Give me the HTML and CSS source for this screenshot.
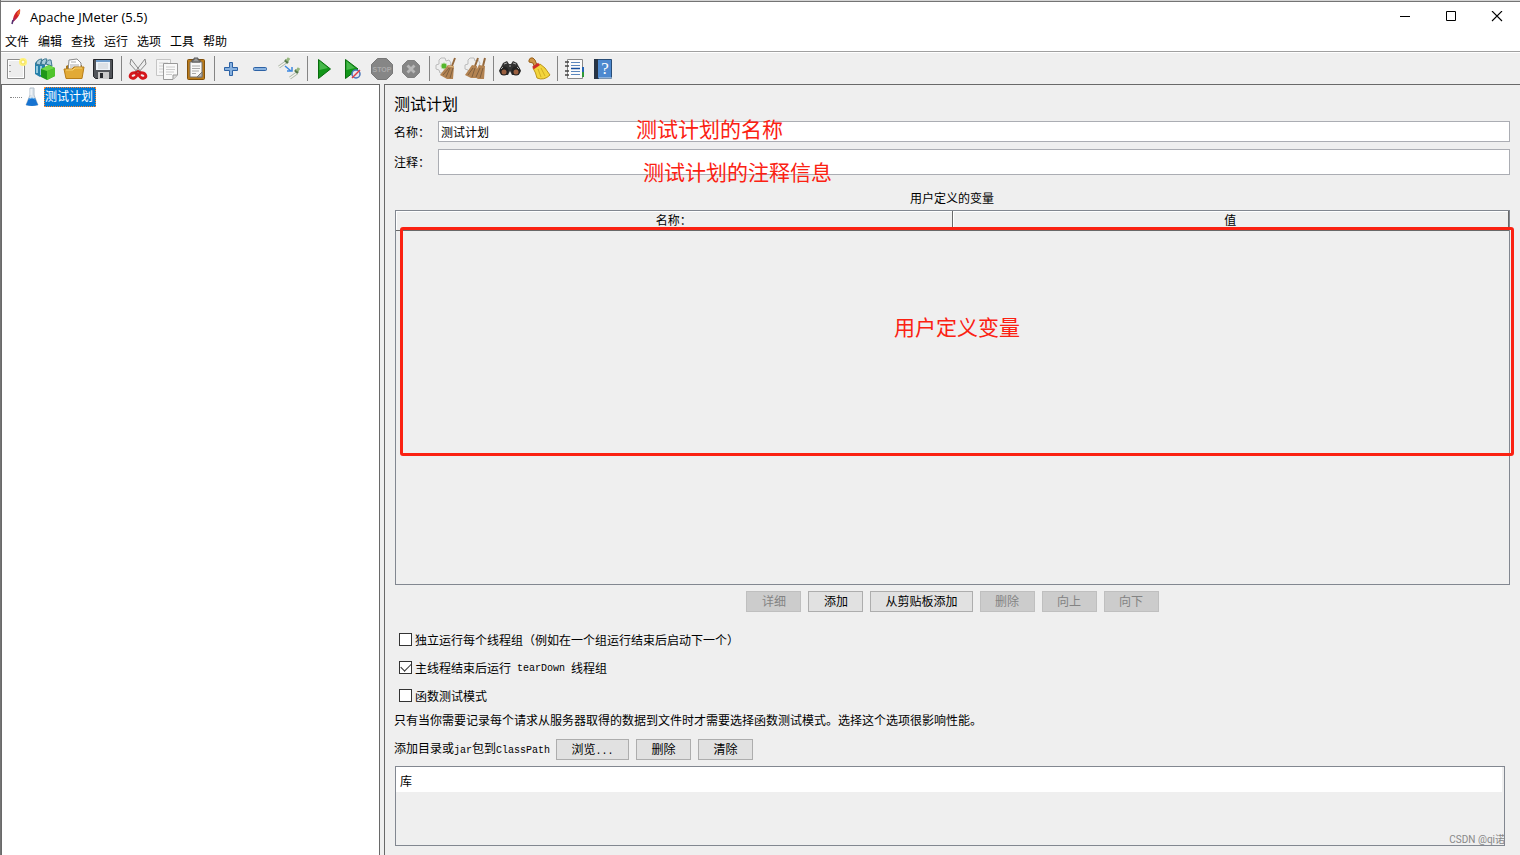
FILE: index.html
```html
<!DOCTYPE html>
<html lang="zh-CN">
<head>
<meta charset="utf-8">
<title>Apache JMeter (5.5)</title>
<link rel="stylesheet" href="styles.css">
</head>
<body>
<div class="window">
  <header class="titlebar">
    <svg class="feather" width="16" height="16" viewBox="0 0 16 16"><path d="M5 11C5 7 8 2 12 0C13 4 10 9 6 12Z" fill="#d22128"/><path d="M9 4L12 0V4L10 7Z" fill="#e9622b"/><path d="M5 10L8 8L7 11L5 13Z" fill="#a02b65"/><path d="M5 11L4 15" stroke="#54306f" stroke-width="1.500"/></svg>
    <h1 class="app-name">Apache JMeter (5.5)</h1>
    <div class="window-controls">
      <button aria-label="最小化"><svg width="12" height="12" viewBox="0 0 12 12"><path d="M1 5.500H11" stroke="#000"/></svg></button>
      <button aria-label="最大化"><svg width="12" height="12" viewBox="0 0 12 12"><path d="M1.500 0.500H10.500V9.500H1.500Z" stroke="#000" fill="none"/></svg></button>
      <button aria-label="关闭"><svg width="12" height="12" viewBox="0 0 12 12"><path d="M1 0L11 10M11 0L1 10" stroke="#000" stroke-width="1.100"/></svg></button>
    </div>
  </header>
  <nav class="menubar">
    <button>文件</button><button>编辑</button><button>查找</button><button>运行</button><button>选项</button><button>工具</button><button>帮助</button>
  </nav>
  <div class="toolbar">
    <button aria-label="新建"><svg viewBox="0 0 24 24"><path d="M3.500 2.500H20.500V21.500H3.500Z" fill="#fff" stroke="#8d8d8d"/><path d="M5 4H19V20H5Z" fill="#ededed"/><path d="M6 8v1M6 14v1" stroke="#888" stroke-width="1.500"/><circle cx="19" cy="5" r="4" fill="#fff27a"/><circle cx="19" cy="5" r="2" fill="#fffde0" stroke="#f1df55"/></svg></button>
    <button aria-label="模板"><svg viewBox="0 0 24 24"><path d="M2 6L5 3L12 4V18L7 20L2 17Z" fill="#2580aa"/><path d="M3 7Q4 2 9 2L7 8ZM8 7Q9 1 14 2L12 8ZM13 7Q14 2 18 3L19 9Z" fill="#a9ccda" stroke="#3e7891"/><path d="M4 9V16M8 9V18" stroke="#b7e1ee" stroke-width="1.500"/><path d="M8 12L16 8L22 11V19L14 23L8 20Z" fill="#209719"/><path d="M14 14L22 11V19L14 23Z" fill="#4fc42d"/><path d="M8 12L16 8L22 11L14 14Z" fill="#71d848"/></svg></button>
    <button aria-label="打开"><svg viewBox="0 0 24 24"><path d="M4 9L6 8H20V20H4Z" fill="#a87516"/><path d="M7 3L15 2L19 6V15H6Z" fill="#fff" stroke="#8b8b8b"/><path d="M9 5H14M8 8H17M8 10H17" stroke="#aaa"/><path d="M2 12H10L12 10H22L20 21.500H4Z" fill="#e2aa36" stroke="#b77d18"/><path d="M4 13H11L13 11H20" stroke="#f6d577" fill="none"/></svg></button>
    <button aria-label="保存"><svg viewBox="0 0 24 24"><path d="M2.500 2.500H21.500V21.500H4.500L2.500 19.500Z" fill="#515459" stroke="#25272b"/><path d="M5 3H19V13H5Z" fill="#edf3f8"/><path d="M5 3H19V5H5Z" fill="#6f9dcb"/><path d="M7 7H17M7 9H17M7 11H17" stroke="#c9ced2"/><path d="M7 15H18V22H7Z" fill="#c9c9c9"/><path d="M9 16H12V21H9Z" fill="#27292d"/></svg></button>
    <span class="separator"></span>
    <button aria-label="剪切"><svg viewBox="0 0 24 24"><path d="M5 2L15 15L13 17L4 7ZM19 2L9 15L11 17L20 7Z" fill="#ededed" stroke="#888"/><ellipse cx="7.500" cy="18.500" rx="3.500" ry="2.500" fill="none" stroke="#d5161c" stroke-width="3" transform="rotate(-25 7.500 18.500)"/><ellipse cx="16.500" cy="18.500" rx="3.500" ry="2.500" fill="none" stroke="#d5161c" stroke-width="3" transform="rotate(25 16.500 18.500)"/><path d="M9 16L12 14L15 16" stroke="#c41218" stroke-width="2" fill="none"/></svg></button>
    <button aria-label="复制"><svg viewBox="0 0 24 24"><path d="M1.500 2.500H15.500V18.500H1.500Z" fill="#f6f6f6" stroke="#c5c5c5"/><path d="M4 6H13M4 9H8M4 12H8M4 15H8" stroke="#d0d0d0"/><path d="M8.500 6.500H22.500V18L18 22.500H8.500Z" fill="#f9f9f9" stroke="#999"/><path d="M11 10H20M11 12.500H20M11 15H19M11 17.500H17" stroke="#ccc"/><path d="M18 22V18H22" fill="#ddd" stroke="#999"/></svg></button>
    <button aria-label="粘贴"><svg viewBox="0 0 24 24"><rect x="3.500" y="2.500" width="17" height="20" rx="1" fill="#b97a1b" stroke="#80500b"/><path d="M6 5H18V20H6Z" fill="#f8f8f8" stroke="#777"/><path d="M8 9H16M8 11.500H16M8 14H15M8 16.500H12" stroke="#aaa"/><path d="M8 5V3H10V1H14V3H16V5Z" fill="#999" stroke="#555"/><path d="M13 20L18 15V20Z" fill="#bbb" stroke="#777"/></svg></button>
    <span class="separator"></span>
    <button aria-label="展开"><svg viewBox="0 0 24 24"><path d="M10.500 5.500H13.500V10.500H18.500V13.500H13.500V18.500H10.500V13.500H5.500V10.500H10.500Z" fill="#87b1df" stroke="#2d62a5" stroke-linejoin="round"/></svg></button>
    <button aria-label="折叠"><svg viewBox="0 0 24 24"><rect x="5.500" y="10.500" width="13" height="3" rx="1" fill="#87b1df" stroke="#2d62a5"/></svg></button>
    <button aria-label="切换"><svg viewBox="0 0 24 24"><path d="M2 10L9 5M13 21L20 16" stroke="#aeb8aa" stroke-width="3"/><path d="M2 10L9 5M13 21L20 16" stroke="#f5f5ef" stroke-width="1.500"/><path d="M8 3L11 6M18 13L21 16" stroke="#55794b" stroke-width="2.500"/><path d="M10 4L12 1M20 14L22 11" stroke="#96b77e" stroke-width="3"/><path d="M8 9L14 14M15 10V14H10" stroke="#3d88e0" stroke-width="1.500" fill="none"/></svg></button>
    <span class="separator"></span>
    <button aria-label="启动"><svg viewBox="0 0 24 24"><path d="M6.500 2.500L18.500 12L6.500 21.500Z" fill="#129619" stroke="#086b0d"/><path d="M7.500 4L16 11L7.500 13Z" fill="#47b84b"/></svg></button>
    <button aria-label="不停顿启动"><svg viewBox="0 0 24 24"><path d="M4.500 2.500L17 12L4.500 21.500Z" fill="#129619" stroke="#086b0d"/><path d="M5.500 4L14 11L5.500 13Z" fill="#47b84b"/><circle cx="15" cy="17" r="4" fill="#e5e7ef" stroke="#4774ba" stroke-width="1.500"/><path d="M11 21L19 13" stroke="#e13c42" stroke-width="1.500"/></svg></button>
    <button aria-label="停止" disabled><svg viewBox="0 0 24 24"><path d="M7.500 1.500H16.500L22.500 7.500V16.500L16.500 22.500H7.500L1.500 16.500V7.500Z" fill="#868686" stroke="#777"/><text x="12" y="15" text-anchor="middle" class="stop-word">STOP</text></svg></button>
    <button aria-label="关闭线程" disabled><svg viewBox="0 0 24 24"><path d="M8.500 3.500H15.500L20.500 8.500V15.500L15.500 20.500H8.500L3.500 15.500V8.500Z" fill="#868686" stroke="#808080" stroke-linejoin="round"/><path d="M8.500 8.500L15.500 15.500M15.500 8.500L8.500 15.500" stroke="#b8b8b8" stroke-width="2.800"/></svg></button>
    <span class="separator"></span>
    <button aria-label="清除"><svg viewBox="0 0 24 24"><path d="M7 1H11L12 4L15 3L17 6L16 9L18 12L14 16H6L5 13L2 12V8L5 7V3Z" fill="#eee" stroke="#bbb"/><circle cx="10" cy="9" r="3" fill="#54b72c" stroke="#b7dba5"/><path d="M21 1L18 9" stroke="#94683c" stroke-width="2"/><path d="M14 8L20 9L19 22H13L6 18Z" fill="#b38352"/><path d="M15 11L9 18M16 11L12 20M19 11L16 21" stroke="#80603e"/><path d="M14 9L20 10" stroke="#dfbd86"/></svg></button>
    <button aria-label="清除全部"><svg viewBox="0 0 24 24"><path d="M7 1H11L12 4L15 3L17 6L16 9L18 12L14 16H6L5 13L2 12V8L5 7V3Z" fill="#eee" stroke="#bbb"/><path d="M15 1L12 9M22 1L20 9" stroke="#94683c" stroke-width="2"/><path d="M9 8L14 9L13 21H8L2 18ZM16 8L22 9L21 22H15L10 19Z" fill="#b38352"/><path d="M10 11L5 18M12 11L9 20M17 11L13 20M20 11L17 21" stroke="#80603e"/></svg></button>
    <span class="separator"></span>
    <button aria-label="搜索"><svg viewBox="0 0 24 24"><path d="M5 6L9 4L11 7H13L15 4L19 6L23 14L19 18H14L12 14L10 18H5L1 14Z" fill="#333"/><circle cx="6" cy="14" r="4.500" fill="#222"/><circle cx="18" cy="14" r="4.500" fill="#222"/><circle cx="6" cy="15" r="2.500" fill="#9b6040"/><circle cx="18" cy="15" r="2.500" fill="#9b6040"/><path d="M6 7L9 6M15 6L18 7M11 9H13M3 12L5 10M19 10L21 12" stroke="#aaa"/></svg></button>
    <button aria-label="重置搜索"><svg viewBox="0 0 24 24"><path d="M2 3Q3 0 6 1L8 3L10 8L7 9L6 6L2 5Z" fill="#cf9548" stroke="#986019"/><path d="M6 11L13 7L18 11L23 18Q17 24 10 21Q9 16 6 11Z" fill="#f3d53c" stroke="#bc951b"/><path d="M6 11L12 7" stroke="#cf2d29" stroke-width="3"/><path d="M11 12L14 20M14 11L18 19" stroke="#d2ae23"/></svg></button>
    <span class="separator"></span>
    <button aria-label="函数助手"><svg viewBox="0 0 24 24"><path d="M5.500 2.500H20.500V21.500H5.500Z" fill="#fbfbfb" stroke="#888"/><path d="M9 5.500H18M9 8.500H18M9 14.500H18M9 17.500H18" stroke="#5b87bd"/><path d="M9 11.500H18" stroke="#174e9c" stroke-width="1.500"/><path d="M3 5H7M3 9H7M3 14H7M3 18H7" stroke="#444" stroke-width="1.500"/><path d="M20 10H22V15H20Z" fill="#2362b4"/><path d="M20 15H22V20H20Z" fill="#2e9836"/></svg></button>
    <button aria-label="帮助"><svg viewBox="0 0 24 24"><path d="M3.500 2.500H20.500V21.500H3.500Z" fill="#4d89cf" stroke="#294d77"/><path d="M3 2H7V22H3Z" fill="#263345"/><path d="M8 21H21" stroke="#c9d9e9"/><text x="14" y="17" text-anchor="middle" class="help-mark">?</text></svg></button>
  </div>
  <div class="workspace">
    <aside class="tree">
      <span class="branch"></span>
      <svg width="14" height="20" viewBox="0 0 14 20"><path d="M5 1H9V8L13 18H1L5 8Z" fill="#dce5ed" stroke="#b4c1cc"/><path d="M4 11H10L13 18Q7 20 1 18Z" fill="#1673d1"/><path d="M4 12Q7 10 10 12" stroke="#71b7ef" fill="none"/><path d="M6 2V8" stroke="#fff"/></svg>
      <button class="tree-node">测试计划</button>
    </aside>
    <main class="panel">
      <h2 class="panel-title">测试计划</h2>
      <div class="field name-field"><label for="name">名称：</label><input id="name" type="text" value="测试计划"></div>
      <div class="field comment-field"><label for="comment">注释：</label><input id="comment" type="text"></div>
      <div class="table-caption" id="vars">用户定义的变量</div>
      <div class="table-box">
        <table class="variables" aria-labelledby="vars"><thead><tr><th>名称：</th><th>值</th></tr></thead></table>
      </div>
      <div class="actions">
        <button disabled>详细</button><button>添加</button><button>从剪贴板添加</button><button disabled>删除</button><button disabled>向上</button><button disabled>向下</button>
      </div>
      <div class="options">
        <label><input type="checkbox">独立运行每个线程组（例如在一个组运行结束后启动下一个）</label>
        <label><input type="checkbox" checked>主线程结束后运行<span class="latin"> tearDown </span>线程组</label>
        <label><input type="checkbox">函数测试模式</label>
      </div>
      <p class="hint">只有当你需要记录每个请求从服务器取得的数据到文件时才需要选择函数测试模式。选择这个选项很影响性能。</p>
      <div class="classpath">
        <span class="classpath-label">添加目录或<span class="latin">jar</span>包到<span class="latin">ClassPath</span></span>
        <button>浏览<span class="latin">...</span></button><button>删除</button><button>清除</button>
      </div>
      <div class="library-box"><table class="library"><thead><tr><th>库</th></tr></thead></table></div>
      <div class="note note-name">测试计划的名称</div>
      <div class="note note-comment">测试计划的注释信息</div>
      <div class="note note-frame"><span>用户定义变量</span></div>
      <div class="watermark">CSDN @qi诺</div>
    </main>
  </div>
</div>
</body>
</html>
```
FILE: styles.css
```css
* { box-sizing: border-box; }

body {
  margin: 0;
  background: #efefef;
  color: #000;
  font: 12px/18px "Liberation Sans", "Noto Sans CJK SC", sans-serif;
}

button, input { font: inherit; color: inherit; }
button { padding: 0; border: 0; background: none; }
h1, h2, p { margin: 0; font-weight: 400; }

.window {
  display: flex;
  flex-direction: column;
  min-height: 100vh;
  border-left: 1px solid #747474;
}

.titlebar {
  display: flex;
  align-items: center;
  height: 32px;
  padding-left: 7px;
  background: #fff;
  border-top: 1px solid #d5d5d5;
  box-shadow: inset 0 1px #747474;
}
.app-name { margin-left: 6px; font: 13px/18px "Open Sans", "Noto Sans", sans-serif; }
.window-controls { display: flex; margin-left: auto; }
.window-controls button { display: grid; place-items: center; width: 46px; height: 28px; }

.menubar {
  display: flex;
  gap: 9px;
  height: 20px;
  padding-left: 4px;
  background: #fff;
  border-bottom: 1px solid #a0a0a0;
}
.menubar button { padding-top: 1px; line-height: 18px; }

.toolbar {
  display: flex;
  align-items: center;
  height: 32px;
  border-top: 1px solid #fff;
}
.toolbar button { display: grid; place-items: center; width: 29px; height: 30px; }
.toolbar svg { width: 24px; height: 24px; }
.separator { width: 1px; height: 25px; margin: 0 1px 0 4px; background: #858585; }
.stop-word { font: bold 7px "Liberation Sans", sans-serif; fill: #aaa; }
.help-mark { font: 17px "Liberation Serif", serif; fill: #fff; }

.workspace { display: flex; flex: 1; gap: 4px; }
.tree {
  display: flex;
  align-items: flex-start;
  flex: 0 0 379px;
  padding: 2px 0 0 8px;
  background: #fff;
  border: 1px solid #696969;
  border-bottom: 0;
}
.branch { width: 12px; margin: 10px 3px 0 0; border-top: 1px dotted #888; }
.tree-node {
  height: 20px;
  margin-left: 5px;
  padding: 1px 2px 0 0;
  background: #0078d7;
  border: 1px dotted #ff8728;
  color: #fff;
  line-height: 17px;
}

.panel {
  position: relative;
  display: flex;
  flex-direction: column;
  flex: 1;
  min-width: 0;
  padding: 8px 10px 9px 9px;
  border-top: 1px solid #696969;
  border-left: 1px solid #696969;
}
.panel-title { padding-top: 1px; font-size: 16px; line-height: 22px; }
.field { display: flex; align-items: center; }
.field label { width: 44px; padding-top: 2px; }
.field input {
  flex: 1;
  min-width: 0;
  padding: 0 2px;
  background: #fff;
  border: 1px solid #abadb3;
  outline: 0;
}
.name-field { margin-top: 5px; }
.name-field input { height: 21px; }
.comment-field { margin-top: 7px; }
.comment-field input { height: 26px; }
.table-caption { margin-top: 14px; line-height: 20px; text-align: center; }

.table-box { flex: 1; min-height: 120px; margin: 1px 0 0 1px; border: 1px solid #828790; }
.variables { width: 100%; border-collapse: collapse; table-layout: fixed; }
.variables th {
  height: 19px;
  padding: 1px 0 0;
  border-right: 1px solid #696969;
  border-bottom: 1px solid #696969;
  font-weight: 400;
  line-height: 18px;
  box-shadow: inset 1px 1px #fff;
}
.actions { display: flex; justify-content: center; gap: 7px; margin: 6px 0 0 1px; }
.actions button, .classpath button {
  height: 21px;
  min-width: 55px;
  padding: 1px 14px 0;
  background: #e1e1e1;
  border: 1px solid #adadad;
  line-height: 18px;
}
.actions button:disabled { background: #ccc; border-color: #bfbfbf; color: #838383; }

.options { display: grid; justify-items: start; margin-top: 14px; padding-left: 5px; }
.options label { display: flex; align-items: center; height: 28px; padding-top: 1px; white-space: pre; }
.options input {
  appearance: none;
  display: grid;
  place-items: center;
  width: 13px;
  height: 13px;
  margin: 0 3px 2px 0;
  background: #fff;
  border: 1px solid #333;
}
.options input:checked::before {
  content: "";
  width: 9px;
  height: 5px;
  margin-bottom: 3px;
  border: solid #333;
  border-width: 0 0 1px 1px;
  transform: rotate(-45deg);
}
.latin { font: 10px/18px "Liberation Mono", monospace; white-space: pre; }
.hint { padding-top: 1px; line-height: 20px; }
.classpath { display: flex; align-items: center; gap: 7px; margin-top: 7px; }
.classpath-label { padding-top: 2px; white-space: nowrap; }
.classpath-label + button { min-width: 73px; margin-left: -1px; }
.library-box { height: 80px; margin: 6px 5px 0 1px; padding-right: 2px; border: 1px solid #828790; }
.library { width: 100%; border-collapse: collapse; background: #fff; }
.library th { height: 25px; padding: 4px 4px 0; font-weight: 400; text-align: left; }

.note { position: absolute; color: #fb2112; font-size: 21px; line-height: 30px; pointer-events: none; white-space: nowrap; }
.note-name { top: 30px; left: 251px; }
.note-comment { top: 73px; left: 258px; }
.note-frame {
  top: 142px;
  right: 6px;
  left: 15px;
  display: grid;
  place-items: center;
  height: 229px;
  padding-bottom: 27px;
  border: 3px solid #fb2112;
  border-radius: 3px;
}
.watermark { position: absolute; right: 15px; bottom: 6px; color: #888; font: 10px/18px Roboto, "Noto Sans CJK SC", sans-serif; }
```
